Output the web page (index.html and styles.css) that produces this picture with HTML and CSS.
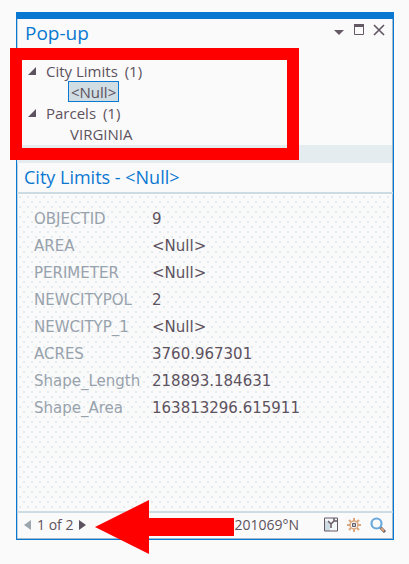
FILE: index.html
```html
<!DOCTYPE html>
<html lang="en">
<head>
<meta charset="utf-8">
<title>Pop-up</title>
<link rel="stylesheet" href="styles.css">
</head>
<body>
<main class="popup">
  <header class="titlebar">
    <h1 class="title">Pop-up</h1>
    <div class="window-actions">
      <button class="icon-button" type="button" aria-label="Options">
        <svg width="12" height="16" viewBox="0 0 12 16"><path d="M1 8h10l-5 5z" fill="#665966"/></svg>
      </button>
      <button class="icon-button" type="button" aria-label="Maximize">
        <svg width="12" height="16" viewBox="0 0 12 16"><path d="M1.500 3.500h9v9h-9z" fill="none" stroke="#665966"/><path d="M1 2h10v3H1z" fill="#665966"/></svg>
      </button>
      <button class="icon-button" type="button" aria-label="Close">
        <svg width="12" height="16" viewBox="0 0 12 16"><path d="M1 3l10 10M11 3L1 13" fill="none" stroke="#665966" stroke-width="1.700"/></svg>
      </button>
    </div>
  </header>

  <nav class="tree" aria-label="Features">
    <ul class="tree-list">
      <li>
        <button class="tree-group" type="button"><svg class="caret" width="8" height="8" viewBox="0 0 8 8"><path d="M8 0v8H0z" fill="#5d5260"/></svg>City Limits <span>(1)</span></button>
        <ul class="tree-children"><li><button class="tree-item selected" type="button">&lt;Null&gt;</button></li></ul>
      </li>
      <li>
        <button class="tree-group" type="button"><svg class="caret" width="8" height="8" viewBox="0 0 8 8"><path d="M8 0v8H0z" fill="#5d5260"/></svg>Parcels <span>(1)</span></button>
        <ul class="tree-children"><li><button class="tree-item" type="button">VIRGINIA</button></li></ul>
      </li>
    </ul>
    <div class="highlight-box"></div>
  </nav>
  <div class="splitter"></div>

  <h2 class="feature-title">City Limits - &lt;Null&gt;</h2>
  <section class="details">
    <table class="fields">
      <tbody>
        <tr><th scope="row">OBJECTID</th><td>9</td></tr>
        <tr><th scope="row">AREA</th><td>&lt;Null&gt;</td></tr>
        <tr><th scope="row">PERIMETER</th><td>&lt;Null&gt;</td></tr>
        <tr><th scope="row">NEWCITYPOL</th><td>2</td></tr>
        <tr><th scope="row">NEWCITYP_1</th><td>&lt;Null&gt;</td></tr>
        <tr><th scope="row">ACRES</th><td>3760.967301</td></tr>
        <tr><th scope="row">Shape_Length</th><td>218893.184631</td></tr>
        <tr><th scope="row">Shape_Area</th><td>163813296.615911</td></tr>
      </tbody>
    </table>
  </section>

  <footer class="statusbar">
    <div class="pager">
      <button class="icon-button" type="button" aria-label="Previous"><svg width="7" height="10" viewBox="0 0 7 10"><path d="M7 0v10L0 5z" fill="#9ba6ae"/></svg></button>
      <span>1 of 2</span>
      <button class="icon-button" type="button" aria-label="Next"><svg width="7" height="10" viewBox="0 0 7 10"><path d="M0 0v10l7-5z" fill="#5d5260"/></svg></button>
      <svg class="pointer-arrow" width="139" height="54" viewBox="0 0 139 54"><path d="M0 27L54 0v18h85v18H54v18z" fill="#f00"/></svg>
    </div>
    <span class="coordinates">8201069°N</span>
    <div class="tools">
      <button class="icon-button" type="button" aria-label="Select feature">
        <svg width="14" height="15" viewBox="0 0 14 15"><path d="M1 1h12v13H1z" fill="#f5f8f9"/><path d="M1 3l5 4v7H1z" fill="#cddce3"/><path d="M.5 1h13v13H.5z" fill="none" stroke="#665966"/><path d="M4 4l3 3v4M7 7l3-3h3M10 4V1" fill="none" stroke="#665966" stroke-width="1.500"/></svg>
      </button>
      <button class="icon-button" type="button" aria-label="Flash feature">
        <svg width="16" height="16" viewBox="0 0 16 16"><path d="M8 1v3M8 12v3M1 8h3M12 8h3M3 3l2 2M11 11l2 2M13 3l-2 2M5 11l-2 2" stroke="#dba77e" stroke-width="2"/><circle cx="8" cy="8" r="4" fill="#faf4ee" stroke="#dba77e" stroke-width="1.500"/><path d="M6.500 6.500h3v3h-3z" fill="#b9cedb" stroke="#665966"/></svg>
      </button>
      <button class="icon-button" type="button" aria-label="Zoom to feature">
        <svg width="16" height="16" viewBox="0 0 16 16"><path d="M10 10l5 5" stroke="#665966" stroke-width="3"/><path d="M11 11l3 3" stroke="#dba77e" stroke-width="2"/><circle cx="6.500" cy="6.500" r="5" fill="#fafafa" stroke="#69a9dc" stroke-width="2.200"/></svg>
      </button>
    </div>
  </footer>
</main>
</body>
</html>
```
FILE: styles.css
```css
* {
  box-sizing: border-box;
}

body {
  margin: 0;
  min-height: 100vh;
  display: flex;
  padding: 12px 15px 24px 16px;
  background: #fafafa;
  color: #5d5260;
  font-family: "Open Sans", "Noto Sans", sans-serif;
  font-size: 14px;
}

ul {
  list-style: none;
  margin: 0;
  padding: 0;
}

button {
  font: inherit;
  color: inherit;
  background: none;
  border: 0;
  padding: 0;
  display: flex;
  align-items: center;
}

.popup {
  flex: 1;
  min-width: 0;
  display: flex;
  flex-direction: column;
  border: 1px solid #0a78d1;
  border-top: 0;
  box-shadow: inset -1px -1px #a2b9cb, inset 1px 0 #bcd2e2;
}

.titlebar {
  display: flex;
  justify-content: space-between;
  height: 36px;
  border-top: 7px solid #0a78d1;
  padding: 0 8px;
}

.title {
  margin: 0;
  font-size: 19px;
  line-height: 28px;
  font-weight: 400;
  color: #0a78d1;
}

.window-actions {
  display: flex;
  gap: 8px;
  height: 22px;
}

.tree {
  position: relative;
  height: 97px;
  padding: 12px 12px 0 11px;
  font-size: 15px;
}

.tree-group {
  height: 21px;
  white-space: pre;
}

.tree-group span {
  margin-left: 3px;
}

.caret {
  margin-right: 10px;
}

.tree-children {
  padding-left: 40px;
}

.tree-item {
  height: 21px;
  padding: 0 1px;
  border: 1px solid transparent;
}

.tree-item.selected {
  padding: 0 2px;
  background: #d0dde3;
  border-color: #0a78d1;
}

.highlight-box {
  position: absolute;
  left: -7px;
  right: 94px;
  top: 0;
  height: 112px;
  border: 12px solid #f00;
}

.splitter {
  height: 18px;
  margin-right: 1px;
  background: #e4ecef;
}

.feature-title {
  margin: 0;
  padding: 0 7px;
  font-size: 18px;
  line-height: 29px;
  font-weight: 400;
  color: #0a78d1;
  border-bottom: 2px solid #cddce3;
}

.details {
  flex: 1;
  margin: 0 2px;
  padding: 12px 15px;
  font-family: "DejaVu Sans", sans-serif;
  font-size: 15px;
  background:
    radial-gradient(circle at 1px 1px, #e2ebef 0 1px, transparent 1px) 4px 7px / 8px 10px,
    radial-gradient(circle at 1px 1px, #e2ebef 0 1px, transparent 1px) 8px 12px / 8px 10px;
}

.fields {
  width: 100%;
  border-collapse: collapse;
  line-height: 27px;
}

.fields th {
  width: 118px;
  padding: 0;
  text-align: left;
  font-weight: 400;
  color: #98a2ac;
}

.fields td {
  padding: 0;
}

.statusbar {
  display: flex;
  align-items: center;
  height: 28px;
  border-top: 2px solid #cddce3;
  padding: 0 7px 3px;
}

.pager {
  position: relative;
  display: flex;
  align-items: center;
  gap: 6px;
}

.pointer-arrow {
  position: absolute;
  left: 71px;
  top: -15px;
}

.coordinates {
  margin-left: auto;
}

.tools {
  display: flex;
  gap: 8px;
  margin-left: 25px;
}
```
